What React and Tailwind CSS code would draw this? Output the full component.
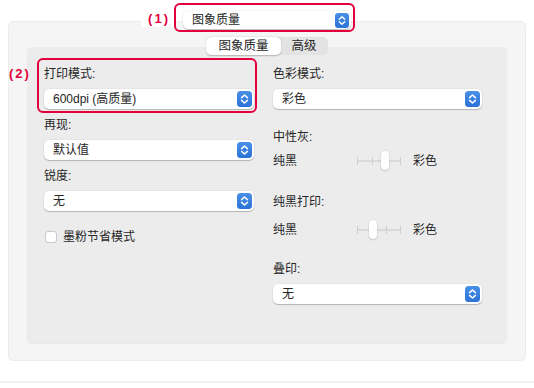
import React from "react";

const font = {
  fontFamily: '"Liberation Sans", "Noto Sans CJK SC", sans-serif',
};

// Blue up/down stepper at the right end of every popup
const Stepper = ({ size = 16 }) => (
  <svg width={size - 1} height={size} viewBox="0 0 15 16">
    <defs>
      <linearGradient id="stp" x1="0" y1="0" x2="0" y2="1">
        <stop offset="0" stopColor="#4a90e8" />
        <stop offset="1" stopColor="#2a72d6" />
      </linearGradient>
    </defs>
    <rect x="0" y="0" width="15" height="16" rx="3.5" fill="url(#stp)" />
    <path d="M4.6 6.6 L7.5 4 L10.4 6.6" fill="none" stroke="#fff" strokeWidth="1.5" strokeLinecap="round" strokeLinejoin="round" />
    <path d="M4.6 9.4 L7.5 12 L10.4 9.4" fill="none" stroke="#fff" strokeWidth="1.5" strokeLinecap="round" strokeLinejoin="round" />
  </svg>
);

const Select = ({ value }) => (
  <div className="flex h-[20px] items-center justify-between rounded-[5px] bg-white pl-[9px] pr-[2px] shadow-[0_1px_1px_rgba(0,0,0,0.22),0_0_0_0.5px_rgba(0,0,0,0.06)]">
    <span className="text-[12px] leading-4 text-[#262626]">{value}</span>
    <Stepper />
  </div>
);

const Label = ({ children, className = "" }) => (
  <div className={`h-4 text-[12px] leading-4 text-[#262626] ${className}`}>{children}</div>
);

const Slider = ({ pos }) => (
  <div className="relative h-[20px] w-[44px]">
    <div className="absolute left-0 right-0 top-[9px] h-[2px] bg-[#d9d9d9]" />
    <div className="absolute left-0 top-[6px] h-[8px] w-px bg-[#cfcfcf]" />
    <div className="absolute left-[15px] top-[6px] h-[8px] w-px bg-[#cfcfcf]" />
    <div className="absolute left-[29px] top-[6px] h-[8px] w-px bg-[#cfcfcf]" />
    <div className="absolute left-[43px] top-[6px] h-[8px] w-px bg-[#cfcfcf]" />
    <div
      className={`absolute top-0 h-[19px] w-[8px] rounded-full bg-white shadow-[0_0.5px_1.5px_rgba(0,0,0,0.3)] ${pos === 2 ? "left-[24px]" : "left-[12px]"}`}
    />
  </div>
);

const SliderRow = ({ pos, className = "" }) => (
  <div className={`flex h-[20px] items-center text-[12px] leading-4 text-[#262626] ${className}`}>
    <span className="w-[84px]">纯黑</span>
    <Slider pos={pos} />
    <span className="ml-[12px]">彩色</span>
  </div>
);

export default function App() {
  return (
    <div className="h-[388px] w-[534px] overflow-hidden bg-white" style={font}>
      {/* (1) preset popup */}
      <div className="relative z-10 flex h-[29px] items-start pl-[141px] pt-[11px]">
        <div className="flex h-[16px] w-[33px] items-center justify-end bg-white pr-[4px] text-[13px] font-bold leading-4 tracking-[2px] text-[#e2003c]">
          (1)
        </div>
        <div className="relative ml-[9px] w-[168px]">
          <div className="flex h-[18px] items-center justify-between rounded-[5px] bg-white pl-[9px] pr-[2px] shadow-[0_1px_1px_rgba(0,0,0,0.2),0_0_0_0.5px_rgba(0,0,0,0.06)]">
            <span className="text-[12px] leading-4 text-[#262626]">图象质量</span>
            <Stepper size={15} />
          </div>
          <div className="pointer-events-none absolute -bottom-[3px] -left-[9px] -right-[4px] -top-[8px] rounded-[6px] border-[2.5px] border-[#e2003c]" />
        </div>
      </div>

      {/* outer panel */}
      <div className="relative z-0 mx-[8px] -mt-[8px] flex h-[340px] flex-col items-center rounded-[5px] border border-[#ececec] bg-[#f5f5f5] px-[18px] pt-[15px]">
        {/* segmented tabs */}
        <div className="relative z-10 flex h-[18px] rounded-[5px] bg-[#e3e3e3] text-[12.5px] leading-4 text-[#262626]">
          <div className="flex items-center rounded-[5px] bg-white px-[12px] shadow-[0_0.5px_1.5px_rgba(0,0,0,0.25)]">图象质量</div>
          <div className="flex items-center px-[11px]">高级</div>
        </div>

        {/* inner panel */}
        <div className="-mt-[8px] flex h-[296px] w-full gap-[19px] rounded-[5px] bg-[#ececec] pl-[17px] pt-[19px] shadow-[0_1px_1px_rgba(0,0,0,0.06)]">
          {/* left column */}
          <div className="flex w-[210px] flex-col">
            <div className="relative">
              <Label>打印模式:</Label>
              <div className="mt-[7px]">
                <Select value="600dpi (高质量)" />
              </div>
              <div className="pointer-events-none absolute -bottom-[4px] -left-[7px] -right-[3px] -top-[8px] rounded-[6px] border-[2.5px] border-[#e2003c]" />
              <div className="absolute -left-[35px] top-0 h-4 text-[13px] font-bold leading-4 tracking-[2px] text-[#e2003c]">(2)</div>
            </div>
            <Label className="mt-[8px]">再现:</Label>
            <div className="mt-[7px]">
              <Select value="默认值" />
            </div>
            <Label className="mt-[8px]">锐度:</Label>
            <div className="mt-[7px]">
              <Select value="无" />
            </div>
            <div className="mt-[18px] flex h-4 items-center">
              <div className="ml-[1px] h-[12px] w-[12px] rounded-[3px] border border-[#c9c9c9] bg-white" />
              <span className="ml-[6px] text-[12px] leading-4 text-[#262626]">墨粉节省模式</span>
            </div>
          </div>

          {/* right column */}
          <div className="flex w-[209px] flex-col">
            <Label>色彩模式:</Label>
            <div className="mt-[7px]">
              <Select value="彩色" />
            </div>
            <Label className="mt-[20px]">中性灰:</Label>
            <SliderRow pos={2} className="mt-[6px]" />
            <Label className="mt-[23px]">纯黑打印:</Label>
            <SliderRow pos={1} className="mt-[10px]" />
            <Label className="mt-[21px]">叠印:</Label>
            <div className="mt-[7px]">
              <Select value="无" />
            </div>
          </div>
        </div>
      </div>

      {/* bottom divider */}
      <div className="mt-[20px] h-[2px] w-full bg-[#efefef]" />
    </div>
  );
}
